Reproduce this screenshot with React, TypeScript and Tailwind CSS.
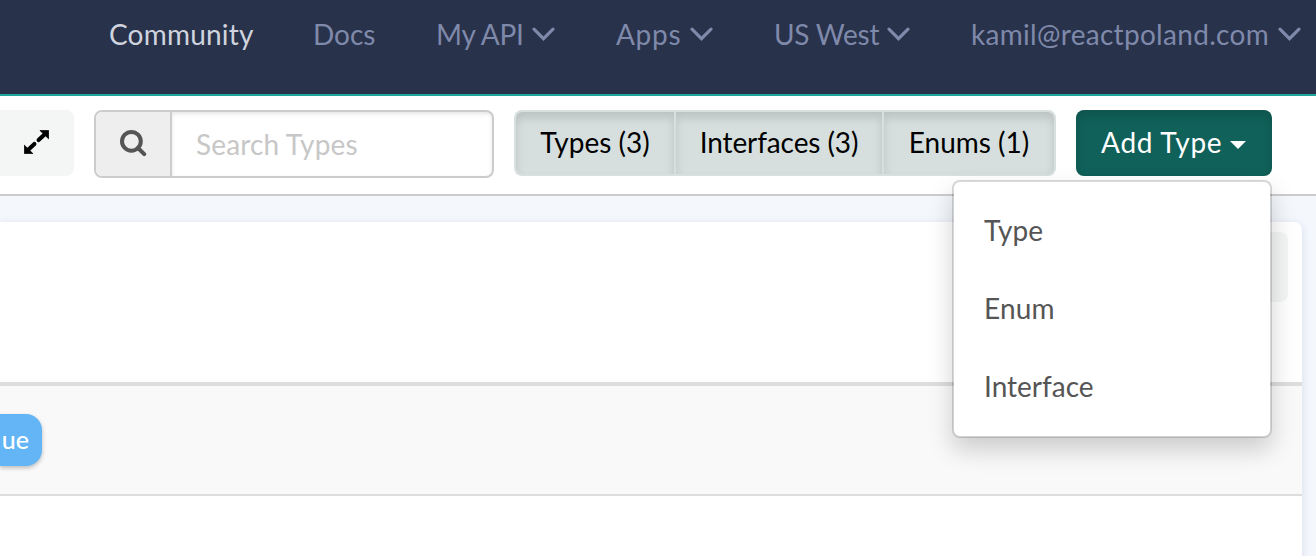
import type { ReactNode } from 'react';

function Chevron() {
  return (
    <svg className="block h-[14px] w-[23px] shrink-0" viewBox="0 0 23 14" fill="none">
      <path d="M2 2.2 L11.5 11.7 L21 2.2" stroke="currentColor" strokeWidth="3.1" strokeLinecap="round" />
    </svg>
  );
}

function NavItem({ className, label, menu }: { className: string; label: string; menu?: boolean }) {
  return (
    <a className={`flex shrink-0 items-center justify-between whitespace-nowrap ${className}`}>
      <span>{label}</span>
      {menu && <Chevron />}
    </a>
  );
}

function Filter({ className, children }: { className: string; children: ReactNode }) {
  return (
    <button
      className={`h-[66px] shrink-0 border-[#d8e0df] bg-[#d6dfde] pb-[3px] text-center whitespace-nowrap text-black shadow-[inset_0_6px_10px_rgba(0,0,0,0.125)] ${className}`}
    >
      {children}
    </button>
  );
}

export default function App() {
  return (
    <div className="flex h-[556px] w-[1316px] flex-col overflow-hidden bg-[#f4f8fc] font-['Lato','Liberation_Sans',sans-serif] text-[28px] leading-10">
      <nav className="flex h-24 shrink-0 border-b-2 border-[#1fa79d] bg-[#28324b] pt-[14px] pl-[109px] text-[#7f89aa]">
        <div className="flex h-10">
          <NavItem className="w-[204px] tracking-[0.2px] text-[#d0d4de]" label="Community" />
          <NavItem className="w-[123px]" label="Docs" />
          <NavItem className="mr-[61px] w-[119px] tracking-[-0.3px]" label="My API" menu />
          <NavItem className="mr-[61px] w-[97px] tracking-[0.7px]" label="Apps" menu />
          <NavItem className="mr-[61px] w-[136px] tracking-[-0.25px]" label="US West" menu />
          <NavItem className="w-[330px] tracking-[0.3px]" label="kamil@reactpoland.com" menu />
        </div>
      </nav>

      <header className="flex h-[100px] shrink-0 items-start border-b-2 border-[#ccc] bg-white pt-[14px]">
        <button className="flex h-[66px] w-[74px] shrink-0 items-center rounded-r-lg bg-[#f3f6f5] pb-[2px] pl-6">
          <svg className="h-6 w-[25px]" viewBox="0 0 25 24">
            <path d="M15.9 0.4H24.6V8.8L15.9 0.4ZM0.4 15.2V23.6H8.9L0.4 15.2Z" fill="#000" stroke="#000" strokeWidth="0.8" />
            <path d="M20.5 4.6L14.6 10.1M4.5 19.4L10.4 13.9" stroke="#000" strokeWidth="4.1" strokeLinecap="round" />
          </svg>
        </button>
        <div className="ml-5 flex h-[68px] w-[400px] shrink-0 overflow-hidden rounded-lg border-2 border-[#ccc]">
          <div className="flex w-[76px] shrink-0 items-center border-r-2 border-[#ccc] bg-[#eee] pb-[2px] pl-[23px]">
            <svg className="h-[28px] w-[28px]" viewBox="0 0 28 28" fill="none" stroke="#555" strokeWidth="4">
              <circle cx="12.4" cy="12.3" r="9.4" />
              <path d="M19 19L25.2 25.2" strokeLinecap="round" />
            </svg>
          </div>
          <div className="flex flex-1 items-center pl-6 tracking-[0.15px] text-[#c7c7c7] shadow-[inset_0_2px_4px_rgba(0,0,0,0.1)]">
            Search Types
          </div>
        </div>
        <div className="ml-5 flex w-[542px] shrink-0">
          <Filter className="w-[160px] rounded-l-lg border-2 border-r-0">Types (3)</Filter>
          <Filter className="w-[208px] border-2 border-r-0 tracking-[-0.1px]">Interfaces (3)</Filter>
          <Filter className="w-[174px] rounded-r-lg border-2">Enums (1)</Filter>
        </div>
        <div className="relative ml-5 shrink-0">
          <button className="flex h-[66px] w-[196px] items-center justify-between rounded-lg bg-[#106159] pr-[26px] pb-[3px] pl-[25px] whitespace-nowrap text-white shadow-[inset_0_6px_10px_rgba(0,0,0,0.125)]">
            <span className="tracking-[0.75px]">Add Type</span>
            <svg className="mt-[7px] h-2 w-4" viewBox="0 0 16 8">
              <path d="M0 0H16L8 8Z" fill="#fff" />
            </svg>
          </button>
          <ul className="absolute top-[70px] right-0 z-10 flex h-[258px] w-[320px] flex-col rounded-lg border-2 border-black/15 bg-white bg-clip-padding pt-[9px] text-[#555] shadow-[0_12px_24px_rgba(0,0,0,0.175)]">
            <li className="flex h-[78px] items-center pl-[30px]">Type</li>
            <li className="flex h-[78px] items-center pl-[30px] tracking-[0.2px]">Enum</li>
            <li className="flex h-[78px] items-center pl-[30px]">Interface</li>
          </ul>
        </div>
      </header>

      <main className="min-h-0 flex-1 pt-[26px] pr-[14px]">
        <section className="h-[360px] rounded-tr-lg bg-white shadow-[0_2px_8px_rgba(60,70,140,0.16)]">
          <div className="flex h-40 justify-end pt-[10px] pr-[14px]">
            <div className="h-[70px] w-20 rounded-lg bg-[#f3f6f5]" />
          </div>
          <div className="flex h-[114px] items-center border-t-4 border-b-2 border-[#ddd] bg-[#f9f9f9]">
            <span className="flex h-[52px] w-[42px] items-center justify-end rounded-r-2xl bg-[#64b5f6] pr-[13px] pb-[2px] text-[25px] font-medium text-white shadow-[0_2px_4px_rgba(0,0,0,0.25)]">
              ue
            </span>
          </div>
        </section>
      </main>
    </div>
  );
}
